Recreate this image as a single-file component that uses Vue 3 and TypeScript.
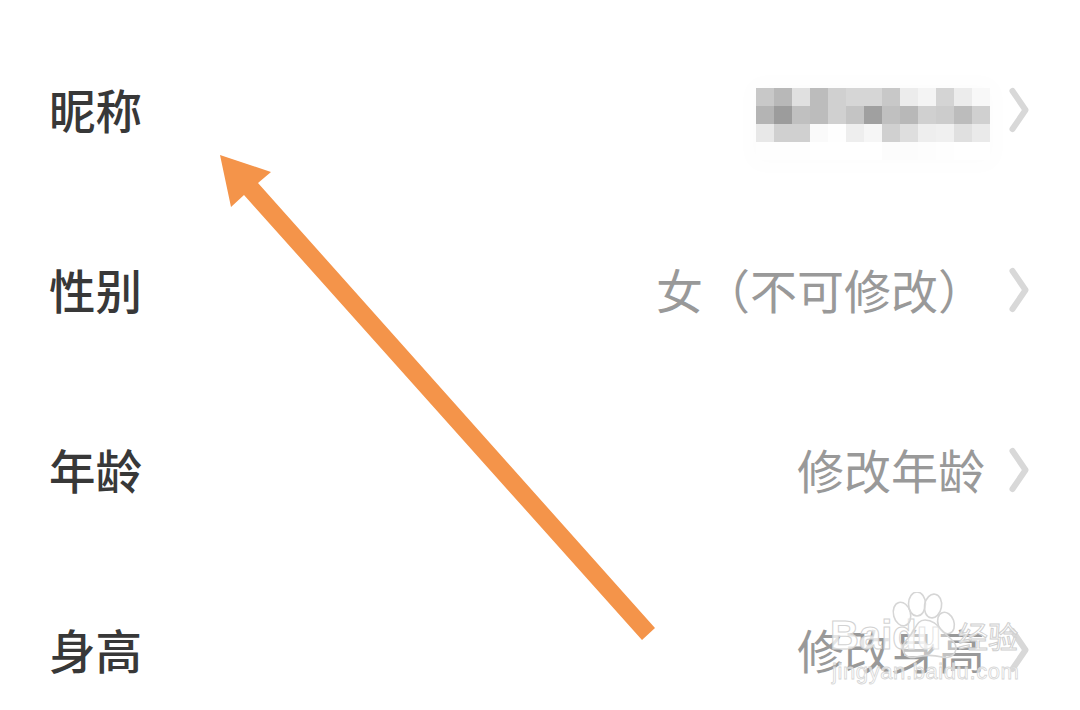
<script setup lang="ts">
const mosaic: number[] = [
  0xc8,0xb8,0xe0,0xbc,0xd0,0xd6,0xd6,0xc8,0xec,0xf4,0xd4,0xec,0xf8,
  0xb4,0x9c,0xc0,0xbc,0xd0,0xc4,0xa0,0xc0,0xb8,0xd0,0xcc,0xbc,0xd0,
  0xe8,0xd0,0xd0,0xfa,0xfe,0xee,0xf6,0xd0,0xde,0xee,0xf0,0xe0,0xea,
  0xfe,0xfe,0xfe,0xff,0xff,0xff,0xff,0xfc,0xfc,0xfd,0xfe,0xff,0xff,
]
const cellColor = (v: number) => `rgb(${v},${v},${v})`
const rows = [
  { label: '昵称', value: '', blur: true },
  { label: '性别', value: '女（不可修改）', blur: false },
  { label: '年龄', value: '修改年龄', blur: false },
  { label: '身高', value: '修改身高', blur: false },
]
</script>

<template>
  <div class="page">
    <div v-for="r in rows" :key="r.label" class="row">
      <span class="label">{{ r.label }}</span>
      <div class="right">
        <div v-if="r.blur" class="mosaic">
          <i v-for="(c, i) in mosaic" :key="i" :style="{ background: cellColor(c) }"></i>
        </div>
        <span v-else class="value">{{ r.value }}</span>
        <svg class="chev" width="24" height="48" viewBox="0 0 24 48">
          <path d="M3.5 5 L16.5 24 L3.5 43" fill="none" stroke="#d8d8d8" stroke-width="6" stroke-linecap="round" stroke-linejoin="round" />
        </svg>
      </div>
    </div>

    <svg class="arrow" width="1080" height="710" viewBox="0 0 1080 710">
      <path d="M220 155 L271 172 L258 183 L655 628 L642 640 L244 195 L231 207 Z" fill="#f4944a" />
    </svg>

    <div class="mark">
      <span class="baidu">Baidu</span>
      <svg class="paw" width="86" height="80" viewBox="0 0 86 80">
        <g fill="rgba(255,255,255,.4)" stroke="#d6d6d6" stroke-width="1.6">
          <ellipse cx="14" cy="22" rx="8.5" ry="12" transform="rotate(-15 14 22)" />
          <ellipse cx="29" cy="12" rx="8.5" ry="12" />
          <ellipse cx="45" cy="14" rx="8.5" ry="12" transform="rotate(10 45 14)" />
          <ellipse cx="58" cy="31" rx="8" ry="11" transform="rotate(-20 58 31)" />
          <path d="M37 28 C48 28 52 38 62 46 C74 56 66 68 54 65 C46 63 36 63 28 65 C16 68 10 56 20 46 C28 38 28 28 37 28 Z" />
        </g>
      </svg>
      <span class="jy">经验</span>
      <span class="url">jingyan.baidu.com</span>
    </div>
  </div>
</template>

<style scoped>
.page {
  position: relative;
  width: 1080px;
  height: 710px;
  overflow: hidden;
  background: #fff;
  padding: 19px 50px 0 49px;
  box-sizing: border-box;
  font-family: "Noto Sans CJK SC", "Noto Sans", sans-serif;
}
.row {
  height: 180px;
  display: flex;
  align-items: center;
  justify-content: space-between;
}
.label {
  font-size: 46.5px;
  font-weight: 500;
  color: #383838;
  line-height: 60px;
}
.right {
  display: flex;
  align-items: center;
}
.value {
  font-size: 47px;
  color: #999;
  line-height: 60px;
}
.mosaic {
  display: grid;
  grid-template-columns: repeat(13, 18px);
  grid-auto-rows: 18px;
  margin-top: 30px;
  margin-right: -5px;
  box-shadow: 0 0 22px 8px #fdfdfd;
}
.chev {
  margin-left: 24px;
  margin-right: -3px;
  margin-top: 2px;
  flex: none;
}
.arrow {
  position: absolute;
  left: 0;
  top: 0;
}
.mark {
  position: absolute;
  left: 0;
  top: 0;
  width: 1080px;
  height: 710px;
  font-family: "Liberation Sans", "Noto Sans CJK SC", sans-serif;
  pointer-events: none;
}
.paw {
  position: absolute;
  left: 888px;
  top: 592px;
}
.baidu {
  position: absolute;
  left: 830px;
  top: 612px;
  font-size: 40px;
  line-height: 46px;
  font-weight: 700;
  color: rgba(255, 255, 255, 0.75);
  -webkit-text-stroke: 1px #d2d2d2;
}
.jy {
  position: absolute;
  left: 958px;
  top: 620px;
  font-size: 30px;
  line-height: 36px;
  color: rgba(255, 255, 255, 0.75);
  -webkit-text-stroke: 1px #cfcfcf;
}
.url {
  position: absolute;
  left: 832px;
  top: 659px;
  font-size: 22px;
  line-height: 26px;
  letter-spacing: 0.6px;
  color: rgba(255, 255, 255, 0.6);
  -webkit-text-stroke: 0.8px #d6d6d6;
}
</style>
